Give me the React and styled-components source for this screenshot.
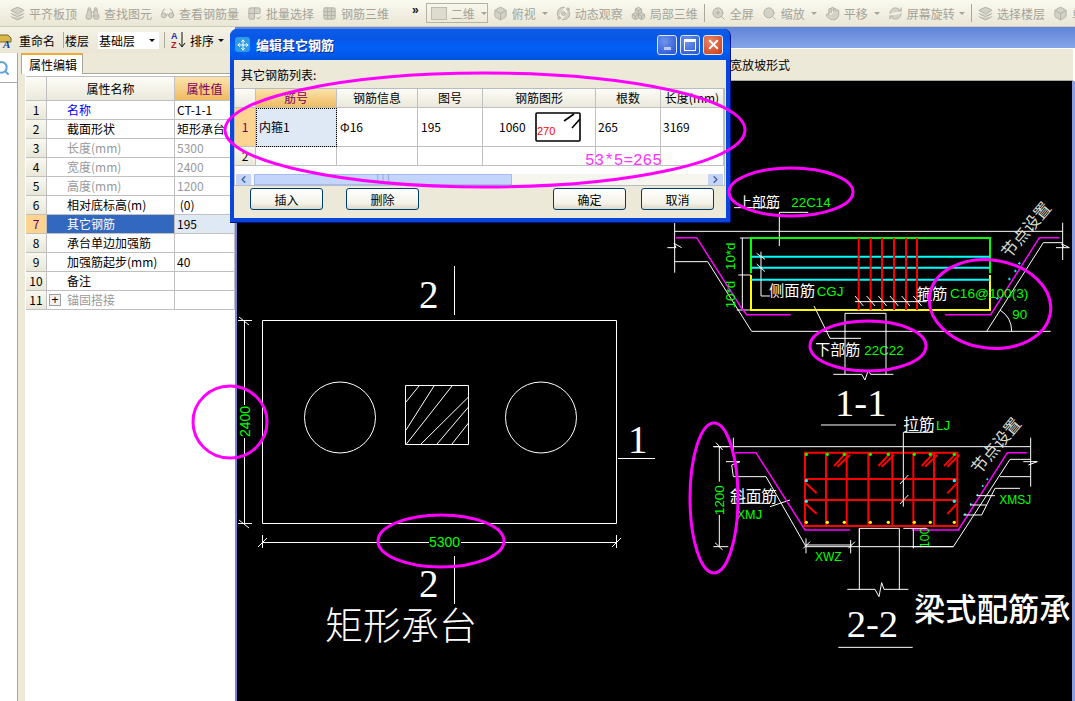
import React from "react";
import styled, { createGlobalStyle } from "styled-components";
import {
  Layers, Binoculars, Glasses, Grid2x2Check, Grid3x3, Box, Orbit, Boxes,
  ZoomIn, Hand, RefreshCw, Search, Move, X, ChevronLeft, ChevronRight,
} from "lucide-react";

const GlobalStyle = createGlobalStyle`
  html, body { margin: 0; padding: 0; background: #fff; }
  body { font: 12px "Noto Sans CJK SC", "Liberation Sans", sans-serif; color: #000; }
`;

const Page = styled.div`
  position: relative;
  width: 1075px;
  height: 701px;
  overflow: hidden;
  display: flex;
  flex-direction: column;
`;

/* top toolbar */
const TopBar = styled.div`
  height: 27px;
  flex: none;
  box-sizing: border-box;
  display: flex;
  align-items: center;
  gap: 8px;
  padding-left: 10px;
  white-space: nowrap;
  overflow: hidden;
  background: linear-gradient(#fbfaf0, #e9e6d5);
  border-bottom: 1px solid #cfccb8;
  color: #a4a398;
`;
const ToolItem = styled.span`
  display: inline-flex;
  align-items: center;
  flex: none;
  gap: 4px;
  svg { flex: none; fill: #d3d2c7; color: #b0afa4; }
`;
const Caret = styled.i`
  flex: none;
  margin-left: ${(p) => p.$gap ?? 6}px;
  width: 0;
  height: 0;
  border: 3px solid transparent;
  border-top: 3px solid ${(p) => (p.$dark ? "#111" : "#a4a398")};
  border-bottom: 0;
`;
const Chevrons = styled.b`
  flex: none;
  margin: 0 -1px 6px 15px;
  font: bold 12px "Liberation Sans", sans-serif;
  color: #111;
`;
const ViewSelect = styled.span`
  flex: none;
  box-sizing: border-box;
  width: 62px;
  height: 20px;
  margin-right: -3px;
  display: inline-flex;
  align-items: center;
  gap: 4px;
  padding-left: 4px;
  border: 1px solid #b5b3a4;
  i.swatch { width: 14px; height: 11px; background: #dddccf; border: 1px solid #bdbcae; }
`;
const TopSep = styled.i`
  flex: none;
  width: 1px;
  height: 18px;
  background: #aaa897;
  margin: 0 -2px;
`;

/* main area */
const Main = styled.div`
  flex: 1;
  display: flex;
  min-height: 0;
`;
const LeftPane = styled.div`
  width: 235px;
  flex: none;
  display: flex;
  flex-direction: column;
  background: #ece9d8;
`;
const SubBar = styled.div`
  height: 26px;
  flex: none;
  display: flex;
  align-items: center;
  white-space: nowrap;
  overflow: hidden;
  font-size: 12px;
  background: linear-gradient(#f4f2e6, #e9e6d6);
`;
const SubText = styled.span`
  margin-left: ${(p) => p.$ml || 0}px;
  flex: none;
`;
const SubSep = styled.i`
  flex: none;
  width: 1px;
  height: 16px;
  margin-left: ${(p) => p.$ml}px;
  background: #aca899;
`;
const FloorSelect = styled.span`
  flex: none;
  box-sizing: border-box;
  width: 61px;
  height: 17px;
  margin-left: 9px;
  padding-left: 1px;
  display: flex;
  align-items: center;
  justify-content: space-between;
  line-height: 15px;
  background: #fff;
  i { margin: 0 4px 0 0; }
`;
const PaneBody = styled.div`
  flex: 1;
  display: flex;
  min-height: 0;
`;
const Rail = styled.div`
  width: 17px;
  flex: none;
  background: #fff;
  border-right: 1px solid #a8a698;
  margin-right: 2px;
`;
const RailSearch = styled.div`
  height: 30px;
  box-sizing: border-box;
  border-bottom: 1px solid #aaa;
  overflow: hidden;
  padding-top: 7px;
  svg { margin-left: -6px; color: #5aa5dc; }
`;
const PropPanel = styled.div`
  flex: 1;
  display: flex;
  flex-direction: column;
  min-width: 0;
`;
const TabStrip = styled.div`
  height: 20px;
  flex: none;
  padding-left: 1px;
`;
const Tab = styled.div`
  box-sizing: border-box;
  width: 62px;
  height: 21px;
  padding-left: 7px;
  line-height: 19px;
  background: #fff;
  border: 1px solid #a9a795;
  border-top: 2px solid #eda93a;
  border-bottom: 0;
  position: relative;
`;
const PropBody = styled.div`
  flex: 1;
  margin-left: 5px;
  padding: 2px 0 0 1px;
  background: #fff;
  border-top: 1px solid #a9a795;
`;
const PropGrid = styled.div`
  display: grid;
  grid-template-columns: 21px 128px 60px;
  grid-auto-rows: 19px;
  grid-template-rows: 24px;
  border-top: 1px solid #bdbdbd;
  overflow: hidden;
`;
const Cell = styled.div`
  box-sizing: border-box;
  border-right: 1px solid #c0c0c0;
  border-bottom: 1px solid #c0c0c0;
  white-space: nowrap;
  overflow: hidden;
  display: flex;
  align-items: center;
  line-height: 16px;
  padding-left: ${(p) => p.$pad ?? 2}px;
  justify-content: ${(p) => (p.$center ? "center" : "flex-start")};
  color: ${(p) => p.$color || "#000"};
  background: ${(p) => p.$bg || "#fff"};
`;
const HeadCell = styled(Cell)`
  padding-left: 0;
  justify-content: center;
  background: ${(p) => (p.$active
    ? "linear-gradient(#fbe3ad, #efbb60)"
    : "linear-gradient(#fdfcf7, #ebe9db)")};
  color: ${(p) => (p.$active ? "#7a0060" : "#000")};
`;
const NumCell = styled(Cell)`
  padding-left: 0;
  justify-content: center;
  background: ${(p) => (p.$active ? "#fdd392" : "linear-gradient(#f9f8f0, #e9e7d8)")};
  color: ${(p) => (p.$active ? "#6a0060" : "#000")};
`;
const PlusBox = styled.span`
  box-sizing: border-box;
  width: 12px;
  height: 12px;
  margin: 0 6px 0 -18px;
  flex: none;
  border: 1px solid #9c9c9c;
  background: #f2f2f2;
  color: #000;
  display: flex;
  align-items: center;
  justify-content: center;
  font: 12px/10px "Liberation Sans", sans-serif;
`;
const PaneEdge = styled.div`
  width: 2px;
  flex: none;
  background: #7584d6;
`;

const Workspace = styled.div`
  flex: 1;
  display: flex;
  flex-direction: column;
  min-width: 0;
  background: #fff;
`;
const BlueStrip = styled.div`
  height: 21px;
  flex: none;
  background: linear-gradient(#5f84d8, #86a5e8);
`;
const OptionBand = styled.div`
  height: 33px;
  flex: none;
  box-sizing: border-box;
  display: flex;
  align-items: center;
  justify-content: flex-start;
  padding-left: 493px;
  margin-right: 2px;
  background: #ece9d8;
  border-top: 1px solid #fff;
  border-bottom: 1px solid #aca899;
`;
const CanvasRow = styled.div`
  flex: 1;
  display: flex;
  min-height: 0;
`;
const DrawingCanvas = styled.svg`
  display: block;
  flex: 1;
  min-width: 0;
  height: 100%;
  background: #000;
  line, path, rect, circle, polyline {
    vector-effect: non-scaling-stroke;
    fill: none;
  }
`;
const CanvasEdge = styled.div`
  width: 3px;
  flex: none;
  background: #8d9ee0;
`;
const Wire = styled.path`
  stroke: ${(p) => p.$c || "#fff"};
  stroke-width: ${(p) => p.$w || 1}px;
`;
const Caption = styled.text`
  font-family: "Noto Sans CJK SC", sans-serif;
  font-weight: ${(p) => p.$weight || 400};
  fill: ${(p) => p.$c || "#fff"};
`;
const Numeral = styled.text`
  font-family: "Liberation Serif", serif;
  fill: #fff;
`;
const DimText = styled.text`
  font-family: "Liberation Sans", sans-serif;
  fill: #00ff00;
`;

/* dialog */
const Dialog = styled.div`
  position: absolute;
  left: 230px;
  top: 29px;
  width: 500px;
  height: 193px;
  box-sizing: border-box;
  display: flex;
  flex-direction: column;
  padding: 0 4px 4px;
  border-radius: 7px 7px 0 0;
  background: #0a46dc;
  box-shadow: 1px 0 0 #00138c, 0 1px 0 #00138c;
`;
const TitleBar = styled.div`
  height: 31px;
  flex: none;
  margin: 0 -4px;
  display: flex;
  align-items: center;
  gap: 6px;
  padding: 0 7px 0 5px;
  border-radius: 7px 7px 0 0;
  background: linear-gradient(#0a5fe8 0, #0a55e4 30%, #0261f8 60%, #0053e0 100%);
  color: #fff;
  font-size: 13px;
  font-weight: 700;
  text-shadow: 1px 1px 0 #0a2f9c;
`;
const TitleIcon = styled.span`
  width: 15px;
  height: 15px;
  border-radius: 3px;
  display: flex;
  align-items: center;
  justify-content: center;
  background: #2d9be8;
  color: #fff;
`;
const TitleText = styled.span`
  flex: 1;
`;
const WinGroup = styled.span`
  display: flex;
  gap: 3px;
`;
const WinButton = styled.span`
  box-sizing: border-box;
  width: 20px;
  height: 20px;
  display: flex;
  align-items: center;
  justify-content: center;
  border: 1px solid #dfe8fb;
  border-radius: 3px;
  color: #fff;
  background: ${(p) => (p.$close
    ? "radial-gradient(circle at 35% 30%, #e8876a, #c83c14)"
    : "radial-gradient(circle at 35% 30%, #6f95ec, #2350d0)")};
`;
const MinGlyph = styled.i`
  width: 7px;
  height: 3px;
  margin-top: 8px;
  background: #b9c8f2;
`;
const MaxGlyph = styled.i`
  box-sizing: border-box;
  width: 12px;
  height: 12px;
  border: 1px solid #fff;
  border-top-width: 3px;
`;
const DialogBody = styled.div`
  flex: 1;
  display: flex;
  flex-direction: column;
  background: #ece9d8;
  min-height: 0;
`;
const ListLabel = styled.div`
  height: 28px;
  flex: none;
  box-sizing: border-box;
  padding: 6px 0 0 7px;
`;
const ListBox = styled.div`
  height: 98px;
  flex: none;
  box-sizing: border-box;
  position: relative;
  margin-right: 1px;
  background: #fff;
  border: 1px solid #b5bcc4;
  overflow: hidden;
`;
const RebarGrid = styled.div`
  display: grid;
  grid-template-columns: 21px 81px 81px 65px 113px 65px 63px;
  grid-template-rows: 19px 39px 19px;
`;
const FocusCell = styled(Cell)`
  background: #dfe8f5;
  outline: 1px dotted #000;
  outline-offset: -1px;
  padding-left: 3px;
`;
const ShapeCell = styled(Cell)`
  padding-left: 16px;
  gap: 9px;
`;
const ScrollBar = styled.div`
  position: absolute;
  left: 1px;
  right: 1px;
  bottom: 0;
  height: 11px;
  display: flex;
  align-items: center;
  gap: 3px;
  background: #f6f5ee;
`;
const ScrollArrow = styled.span`
  width: 15px;
  height: 11px;
  flex: none;
  display: flex;
  align-items: center;
  justify-content: center;
  background: #c5d4f7;
  color: #3f5f9e;
`;
const ScrollThumb = styled.span`
  width: 258px;
  height: 11px;
  flex: none;
  box-sizing: border-box;
  border: 1px solid #a4bbf0;
  background: #c3d5fb;
  display: flex;
  align-items: center;
  justify-content: center;
  color: #7f9de0;
  font: 9px/9px "Liberation Mono", monospace;
`;
const ScrollSpace = styled.span`
  flex: 1;
`;
const ButtonRow = styled.div`
  flex: 1;
  display: flex;
  align-items: flex-start;
  gap: 23px;
  padding: 2px 12px 0 16px;
`;
const DlgButton = styled.button`
  box-sizing: border-box;
  width: 73px;
  height: 22px;
  padding: 0;
  margin-left: ${(p) => (p.$push ? "auto" : "0")};
  margin-right: ${(p) => (p.$tight ? "-8px" : "0")};
  font: inherit;
  color: #000;
  border: 1px solid #003c74;
  border-radius: 3px;
  background: linear-gradient(#fff, #f4f3ea 70%, #dcd8c8);
`;

/* hand drawn marks */
const Annotations = styled.svg`
  position: absolute;
  inset: 0;
  pointer-events: none;
`;
const Ring = styled.ellipse`
  fill: none;
  stroke: #ff00ff;
  stroke-width: 3px;
`;
const Note = styled.text`
  font-family: "Liberation Mono", monospace;
  font-size: 16px;
  fill: #ff33ff;
`;

const tools = [
  { Icon: Layers, text: "平齐板顶" },
  { Icon: Binoculars, text: "查找图元" },
  { Icon: Glasses, text: "查看钢筋量" },
  { Icon: Grid2x2Check, text: "批量选择" },
  { Icon: Grid3x3, text: "钢筋三维" },
];
const tools2 = [
  { Icon: Box, text: "俯视", caret: 2 },
  { Icon: Orbit, text: "动态观察" },
  { Icon: Boxes, text: "局部三维" },
];
const tools3 = [
  { Icon: ZoomIn, text: "全屏" },
  { Icon: Search, text: "缩放", caret: 2 },
  { Icon: Hand, text: "平移", caret: 2 },
  { Icon: RefreshCw, text: "屏幕旋转", caret: 0 },
];
const tools4 = [
  { Icon: Layers, text: "选择楼层" },
  { Icon: Box, text: "单" },
];

const renderTools = (list) =>
  list.map(({ Icon, text, caret }) => (
    <ToolItem key={text}>
      <Icon size={15} strokeWidth={1.5} />
      {text}
      {caret !== undefined && <Caret $gap={caret} />}
    </ToolItem>
  ));

const props = [
  { name: "名称", value: "CT-1-1", color: "#0000ff" },
  { name: "截面形状", value: "矩形承台" },
  { name: "长度(mm)", value: "5300", muted: true },
  { name: "宽度(mm)", value: "2400", muted: true },
  { name: "高度(mm)", value: "1200", muted: true },
  { name: "相对底标高(m)", value: "\u00A0(0)" },
  { name: "其它钢筋", value: "195", active: true },
  { name: "承台单边加强筋", value: "" },
  { name: "加强筋起步(mm)", value: "40" },
  { name: "备注", value: "" },
  { name: "锚固搭接", value: "", muted: true, plus: true },
];

function PropertyTable() {
  return (
    <PropGrid>
      <HeadCell />
      <HeadCell>属性名称</HeadCell>
      <HeadCell $active>属性值</HeadCell>
      {props.map((p, i) => (
        <React.Fragment key={p.name}>
          <NumCell $active={p.active}>{i + 1}</NumCell>
          <Cell
            $pad={20}
            $bg={p.active ? "#3268c0" : "#fff"}
            $color={p.active ? "#fff" : p.muted ? "#999" : p.color}
          >
            {p.plus && <PlusBox>+</PlusBox>}
            {p.name}
          </Cell>
          <Cell $bg={p.active ? "#dfe8f5" : "#fff"} $color={p.muted ? "#999" : "#000"}>
            {p.value}
          </Cell>
        </React.Fragment>
      ))}
    </PropGrid>
  );
}

const rebarHeads = ["钢筋信息", "图号", "钢筋图形", "根数", "长度(mm)"];

function StirrupShape() {
  return (
    <svg width="46" height="30" viewBox="0 0 46 30">
      <rect x="1" y="1" width="44" height="28" rx="1" fill="#fff" stroke="#000" strokeWidth="1.6" />
      <path d="M29 9L39 2M37 16L45 7" stroke="#000" strokeWidth="1.6" fill="none" />
      <text x="2" y="23" fontSize="11" fill="#ff0000" fontFamily="Liberation Sans, sans-serif">270</text>
    </svg>
  );
}

function EditDialog() {
  return (
    <Dialog>
      <TitleBar>
        <TitleIcon><Move size={12} strokeWidth={2} /></TitleIcon>
        <TitleText>编辑其它钢筋</TitleText>
        <WinGroup>
          <WinButton><MinGlyph /></WinButton>
          <WinButton><MaxGlyph /></WinButton>
          <WinButton $close><X size={15} strokeWidth={3} /></WinButton>
        </WinGroup>
      </TitleBar>
      <DialogBody>
        <ListLabel>其它钢筋列表:</ListLabel>
        <ListBox>
          <RebarGrid>
            <HeadCell />
            <HeadCell $active>筋号</HeadCell>
            {rebarHeads.map((h) => <HeadCell key={h}>{h}</HeadCell>)}
            <NumCell $active>1</NumCell>
            <FocusCell>内箍1</FocusCell>
            <Cell $pad={3}>Φ16</Cell>
            <Cell $pad={3}>195</Cell>
            <ShapeCell>1060<StirrupShape /></ShapeCell>
            <Cell $pad={2}>265</Cell>
            <Cell $pad={2}>3169</Cell>
            <NumCell>2</NumCell>
            <Cell /><Cell /><Cell /><Cell /><Cell /><Cell />
          </RebarGrid>
          <ScrollBar>
            <ScrollArrow><ChevronLeft size={11} strokeWidth={3} /></ScrollArrow>
            <ScrollThumb>|||</ScrollThumb>
            <ScrollSpace />
            <ScrollArrow><ChevronRight size={11} strokeWidth={3} /></ScrollArrow>
          </ScrollBar>
        </ListBox>
        <ButtonRow>
          <DlgButton>插入</DlgButton>
          <DlgButton>删除</DlgButton>
          <DlgButton $push $tight>确定</DlgButton>
          <DlgButton>取消</DlgButton>
        </ButtonRow>
      </DialogBody>
    </Dialog>
  );
}

function PlanView() {
  return (
    <g>
      <Wire as="rect" x="262.5" y="320.5" width="354" height="203" />
      <Wire as="circle" cx="340" cy="417.5" r="35.5" />
      <Wire as="circle" cx="541" cy="417.5" r="35.5" />
      <Wire as="rect" x="405.5" y="385.5" width="63" height="59" />
      <Wire d="M406 402L419 386M406 430L434 386M406 444.500L452 386M421 444L468.500 397M437 444L468.500 407M452 444L468.500 423" />
      <Wire d="M454.500 266V315M454.500 556V604M618 458.500H655" />
      <Numeral x="419" y="308" fontSize="39">2</Numeral>
      <Numeral x="419" y="597" fontSize="39">2</Numeral>
      <Numeral x="628" y="453" fontSize="39">1</Numeral>
      <Wire d="M244.500 320V405M244.500 438V523M238 320.500H252M238 523.500H252M239 317L249 325M239 520L249 528" />
      <DimText fontSize="14" transform="translate(250 437) rotate(-90)">2400</DimText>
      <Wire d="M262 542.500H429M461 542.500H617M262.500 535V548M616.500 535V548M258 547L267 538M612 547L621 538" />
      <DimText fontSize="14" x="429" y="547">5300</DimText>
      <Caption x="325" y="639" fontSize="38" $weight={300}>矩形承台</Caption>
    </g>
  );
}

function SectionOne() {
  return (
    <g transform="translate(660 160) scale(0.33333)">
      <Wire d="M44 214H1208M44 188V338M1208 188V300M22 263H48L42 250L65 263M1188 263H1228L1205 252L1212 263" />
      <Wire d="M44 305H143L275 514H1172M980 514L1150 248H1208" />
      <Wire d="M247 234V450M240 234H273M235 345H273M230 450H270" />
      <Wire $c="#00ff00" $w={2} d="M273 340V234H990V340" />
      <Wire $c="#ffff00" $w={2} d="M273 345V450H990V345" />
      <Wire $c="#00ffff" $w={2} d="M273 290H990M273 323H990M273 359H990" />
      <Wire $c="#ff0000" $w={2} d="M596 234V450M632 234V450M666 234V450M702 234V450M738 234V450M771 234V450" />
      <Wire $c="#ff00ff" $w={1.5} d="M48 233H110L245 445L260 464H392M855 464H992L1138 233H1198" />
      <Wire d="M222 143H358M358 157H445M358 157V258" />
      <Caption x="234" y="142" fontSize="42">上部筋</Caption>
      <DimText x="394" y="140" fontSize="40">22C14</DimText>
      <Wire d="M303 275V408H330M290 280L315 298M290 312L315 335" />
      <Caption x="327" y="408" fontSize="46">侧面筋</Caption>
      <DimText x="470" y="408" fontSize="40">CGJ</DimText>
      <Wire d="M585 425H800M585 408L610 438M620 408L645 438M655 408L680 438M690 408L715 438M725 408L750 438M760 408L785 438" />
      <Caption x="770" y="418" fontSize="46">箍筋</Caption>
      <DimText x="870" y="415" fontSize="41">C16@100(3)</DimText>
      <Wire d="M462 438L510 535H603" />
      <Caption x="466" y="585" fontSize="45">下部筋</Caption>
      <DimText x="613" y="584" fontSize="40">22C22</DimText>
      <Wire d="M555 514V460H678V643M555 514V643M520 643H605L615 660L625 630L632 643H700" />
      <Wire d="M1020 450A75 75 0 0 1 1055 514" />
      <DimText x="1057" y="478" fontSize="40">90</DimText>
      <DimText fontSize="40" transform="translate(225 330) rotate(-90)">10*d</DimText>
      <DimText fontSize="40" transform="translate(225 445) rotate(-90)">10*d</DimText>
      <Wire $c="#00ffff" d="M1008 415H1016M1012 411V419M1044 357H1052M1048 353V361M1062 333H1070M1066 329V337M1074 310H1082M1078 306V314" />
      <Caption fontSize="50" $c="#dcdccc" transform="translate(1048 298) rotate(-50)">节点设置</Caption>
    </g>
  );
}

const dotX = [379, 442, 493, 571, 625, 703, 751, 823];

function SectionTwo() {
  return (
    <g transform="translate(680 400) scale(0.33333)">
      <Wire d="M100 140H1052M160 113V170M1052 113V260M118 140V245M118 345V440M100 140H145M100 440H145M105 428L128 450M108 128L128 150" />
      <DimText fontSize="40" transform="translate(132 345) rotate(-90)">1200</DimText>
      <Wire d="M138 185H180L155 195L160 230H258L378 440H820L990 178H1052M960 230H1050M1030 185H1072L1045 195" />
      <Wire d="M270 320L330 300M155 310H270" />
      <Wire $c="#ff00ff" $w={1.5} d="M165 158H228L375 390H510M695 390H835L982 158H1040" />
      <Wire $c="#ff0000" $w={2} d="M375 158H832V378H375ZM438 158V378M500 158V378M565 158V378M637 158V378M700 158V378M762 158V378M375 237H832M375 300H832" />
      <Wire $c="#ff0000" $w={2} d="M462 198L497 160M472 200L510 165M595 198L630 160M605 200L642 165M725 198L760 160M735 200L772 165M792 198L828 160M802 200L838 165M378 250L410 280M378 312L410 342M802 280L830 250M802 342L830 312" />
      {dotX.map((x) => (
        <React.Fragment key={x}>
          <circle cx={x} cy="163" r="5" style={{ fill: "#00ff00" }} />
          <circle cx={x} cy="367" r="5" style={{ fill: "#ffff00" }} />
        </React.Fragment>
      ))}
      {[[379, 242], [379, 304], [823, 242], [823, 304], [855, 343], [872, 313], [892, 285], [908, 258], [922, 238]].map(([x, y]) => (
        <circle key={`${x}-${y}`} cx={x} cy={y} r={x > 840 ? 3 : 5} style={{ fill: "#00ffff" }} />
      ))}
      <Caption x="670" y="90" fontSize="47">拉筋</Caption>
      <DimText x="768" y="90" fontSize="40">LJ</DimText>
      <Wire d="M670 97H760M670 97V320M660 252L685 225M660 312L685 285" />
      <Caption x="150" y="307" fontSize="47">斜面筋</Caption>
      <DimText x="170" y="358" fontSize="38">XMJ</DimText>
      <DimText x="958" y="312" fontSize="36">XMSJ</DimText>
      <Wire d="M945 265H1020M850 345H905L945 265M870 315H920M890 287H945" />
      <DimText x="405" y="484" fontSize="36">XWZ</DimText>
      <Wire d="M378 435H515M378 415V460M512 420V460M370 445L390 425M505 445L525 425" />
      <DimText fontSize="38" transform="translate(748 445) rotate(-90)">100</DimText>
      <Wire d="M700 385V445M670 385H740M695 440H820" />
      <Wire d="M538 440V385H658V568M538 385V568M502 568H585L597 590L605 548L612 568H685" />
      <Caption fontSize="50" $c="#dcdccc" transform="translate(898 225) rotate(-50)">节点设置</Caption>
      <Wire d="M423 75H648M475 742H698" />
      <Numeral x="465" y="47" fontSize="116">1-1</Numeral>
      <Numeral x="500" y="712" fontSize="116">2-2</Numeral>
      <Caption x="702" y="664" fontSize="94" $weight={500}>梁式配筋承</Caption>
    </g>
  );
}

export default function App() {
  return (
    <Page>
      <GlobalStyle />
      <TopBar>
        {renderTools(tools)}
        <Chevrons>»</Chevrons>
        <ViewSelect><i className="swatch" />二维<Caret $gap={2} /></ViewSelect>
        {renderTools(tools2)}
        <TopSep />
        {renderTools(tools3)}
        <TopSep />
        {renderTools(tools4)}
      </TopBar>
      <Main>
        <LeftPane>
          <SubBar>
            <svg width="17" height="17" viewBox="0 0 17 17" style={{ marginLeft: -2, flex: "none" }}>
              <path d="M1 3h9l3 3v4H1z" fill="#d9b64a" stroke="#7a6a20" />
              <text x="5" y="16" fontSize="11" fontWeight="700" fontStyle="italic" fill="#1b3f9c" fontFamily="Liberation Serif, serif">A</text>
            </svg>
            <SubText $ml={4}>重命名</SubText>
            <SubSep $ml={8} />
            <SubText $ml={1}>楼层</SubText>
            <FloorSelect>基础层<Caret $dark /></FloorSelect>
            <SubSep $ml={5} />
            <svg width="16" height="18" viewBox="0 0 16 18" style={{ marginLeft: 6, flex: "none" }}>
              <text x="0" y="8" fontSize="9" fontWeight="700" fill="#2030b0" fontFamily="Liberation Sans, sans-serif">A</text>
              <text x="0" y="17" fontSize="9" fontWeight="700" fill="#b02020" fontFamily="Liberation Sans, sans-serif">Z</text>
              <path d="M11 1V15M8 12l3 4 3-4" stroke="#111" fill="none" />
            </svg>
            <SubText $ml={3}>排序</SubText>
            <Caret $dark $gap={4} />
          </SubBar>
          <PaneBody>
            <Rail>
              <RailSearch><Search size={16} strokeWidth={3} /></RailSearch>
            </Rail>
            <PropPanel>
              <TabStrip><Tab>属性编辑</Tab></TabStrip>
              <PropBody><PropertyTable /></PropBody>
            </PropPanel>
          </PaneBody>
        </LeftPane>
        <PaneEdge />
        <Workspace>
          <BlueStrip />
          <OptionBand>宽放坡形式</OptionBand>
          <CanvasRow>
            <DrawingCanvas viewBox="237 81 835 620" preserveAspectRatio="xMinYMin">
              <PlanView />
              <SectionOne />
              <SectionTwo />
            </DrawingCanvas>
            <CanvasEdge />
          </CanvasRow>
        </Workspace>
      </Main>
      <EditDialog />
      <Annotations width="1075" height="701" viewBox="0 0 1075 701">
        <Ring cx="485" cy="130" rx="260" ry="57" />
        <Ring cx="791" cy="192" rx="62" ry="24" />
        <Ring cx="990" cy="304" rx="61" ry="44" transform="rotate(8 990 304)" />
        <Ring cx="868" cy="346" rx="58" ry="25" />
        <Ring cx="230" cy="422" rx="37" ry="36" />
        <Ring cx="441" cy="541" rx="63" ry="26" />
        <Ring cx="714" cy="498" rx="24" ry="75" />
        <Note x="585" y="165">53*5=265</Note>
      </Annotations>
    </Page>
  );
}
